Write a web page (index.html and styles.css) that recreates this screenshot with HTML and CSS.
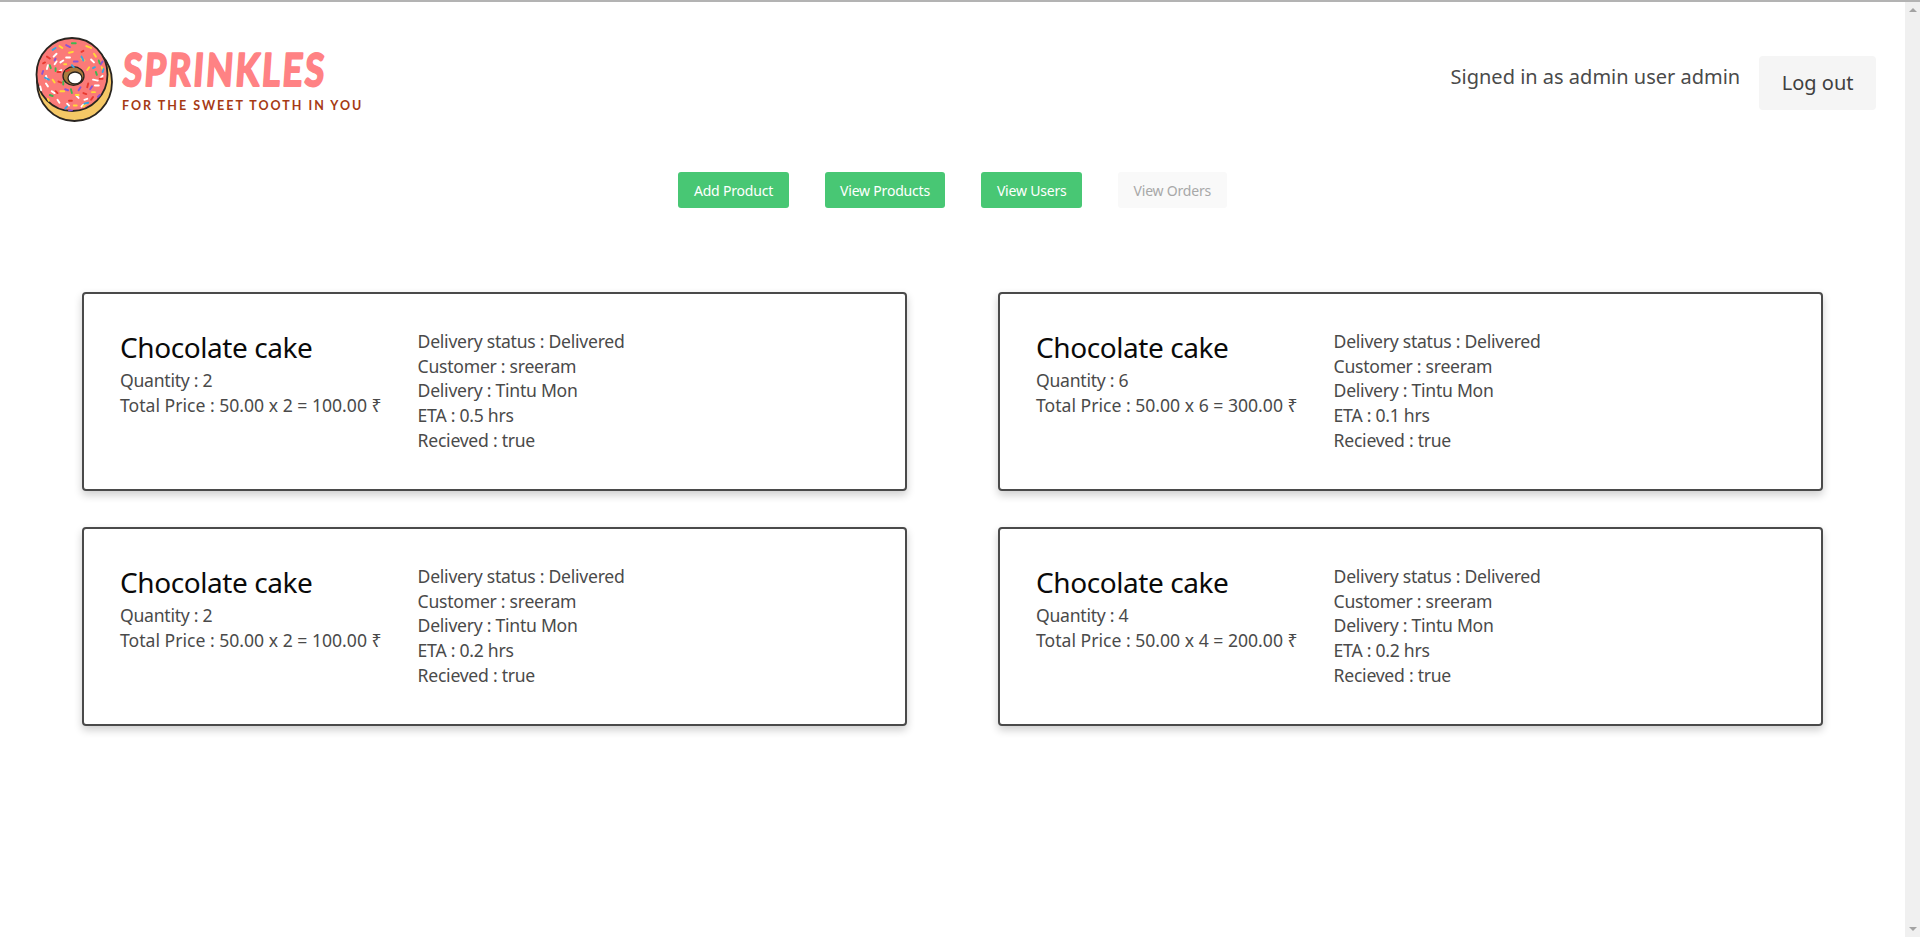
FILE: index.html
```html
<!DOCTYPE html>
<html lang="en">
<head>
<meta charset="utf-8">
<title>Sprinkles</title>
<link rel="stylesheet" href="styles.css">
</head>
<body>
<div class="window">
<div class="page">
  <header class="topbar">
    <div class="brand">
      <svg class="donut" viewBox="0 0 90 90" aria-hidden="true">
        <ellipse cx="44.500" cy="47" rx="37.500" ry="39" fill="#f5c866" stroke="#2a2520" stroke-width="1.800"/>
        <ellipse cx="42" cy="39.500" rx="35.500" ry="36.500" fill="#fb7a78" stroke="#2a2520" stroke-width="1.800"/>
        <ellipse cx="43.500" cy="41" rx="10.500" ry="9.300" fill="#a87a3c" stroke="#2a2520" stroke-width="1.300"/>
        <ellipse cx="45" cy="43" rx="7" ry="6" fill="#fff" stroke="#2a2520" stroke-width="1.300"/>
        <g class="sprinkles" transform="translate(3.500 0.500) scale(.96)">
          <path stroke="#fff" d="M21 22l3-3M34 23l4 0M60 25l3 3M15 31l-1 4M22 30l2-3M29 36l-3 2M7 53l1 4M13 50l2 3M19 58l3 2M62 46l5 1M64 52l4 0M25 67l2 3M35 71l2 2M53 67l3-1M45 63l2 2M13 42l1 3M52 72l-2 2M70 44l2-2M28 28l3-2"/>
          <path stroke="#ffd838" d="M55 11l5 2M37 18l4-1M27 11l3 2M63 19l2 3M50 24l3 2M32 30l2 0M56 36l2-3M15 66l1 2M44 62l3 0M55 71l-3 3M28 58l4 0M42 73l3 0M61 59l3 0M20 46l2 3M71 33l1 2"/>
          <path stroke="#8c55d2" d="M34 10l4 2M23 24l-1 2M42 27l4 0M9 40l1-3M47 57l2-3M67 64l2-2M61 53l-2 3M37 78l3 0M70 30l2-3M33 56l3 1"/>
          <path stroke="#3fb650" d="M40 8l4 0M17 31l1 3M65 38l1 3M31 48l0 3M17 62l3 1M39 56l1 4M68 26l1 3M23 34l0 3"/>
          <path stroke="#3aa6de" d="M20 15l3-2M12 44l4 2M50 22l2 4M62 34l2-1M53 71l4-1M33 76l2-2M73 35l-1 3M40 31l2 2"/>
          <path stroke="#e83a30" d="M14 22l3 2M25 38l3 0M34 37l3-1M50 17l2-1M69 45l3 0M57 50l-1 4M52 60l3 1M37 68l3 0M26 48l3 1M23 58l2 2M62 64l-2 3M10 29l2-1"/>
        </g>
      </svg>
      <div class="wordmark">
        <svg class="brand-name" viewBox="0 0 210 44" role="img" aria-label="SPRINKLES">
          <text class="brand-text" x="6" y="38" textLength="258" lengthAdjust="spacing">SPRINKLES</text>
        </svg>
        <span class="brand-tag">FOR THE SWEET TOOTH IN YOU</span>
      </div>
    </div>
    <div class="account">
      <span class="signed">Signed in as admin user admin</span>
      <a class="logout">Log out</a>
    </div>
  </header>

  <nav class="actions">
    <a class="btn">Add Product</a>
    <a class="btn">View Products</a>
    <a class="btn">View Users</a>
    <a class="btn btn-off">View Orders</a>
  </nav>

  <main class="orders">
    <article class="card">
      <div class="summary">
        <h2>Chocolate cake</h2>
        <p>Quantity : 2</p>
        <p class="total">Total Price : 50.00 x 2 = 100.00 ₹</p>
      </div>
      <div class="details">
        <p>Delivery status : Delivered</p>
        <p>Customer : sreeram</p>
        <p>Delivery : Tintu Mon</p>
        <p>ETA : 0.5 hrs</p>
        <p>Recieved : true</p>
      </div>
    </article>
    <article class="card">
      <div class="summary">
        <h2>Chocolate cake</h2>
        <p>Quantity : 6</p>
        <p class="total">Total Price : 50.00 x 6 = 300.00 ₹</p>
      </div>
      <div class="details">
        <p>Delivery status : Delivered</p>
        <p>Customer : sreeram</p>
        <p>Delivery : Tintu Mon</p>
        <p>ETA : 0.1 hrs</p>
        <p>Recieved : true</p>
      </div>
    </article>
    <article class="card">
      <div class="summary">
        <h2>Chocolate cake</h2>
        <p>Quantity : 2</p>
        <p class="total">Total Price : 50.00 x 2 = 100.00 ₹</p>
      </div>
      <div class="details">
        <p>Delivery status : Delivered</p>
        <p>Customer : sreeram</p>
        <p>Delivery : Tintu Mon</p>
        <p>ETA : 0.2 hrs</p>
        <p>Recieved : true</p>
      </div>
    </article>
    <article class="card">
      <div class="summary">
        <h2>Chocolate cake</h2>
        <p>Quantity : 4</p>
        <p class="total">Total Price : 50.00 x 4 = 200.00 ₹</p>
      </div>
      <div class="details">
        <p>Delivery status : Delivered</p>
        <p>Customer : sreeram</p>
        <p>Delivery : Tintu Mon</p>
        <p>ETA : 0.2 hrs</p>
        <p>Recieved : true</p>
      </div>
    </article>
  </main>
</div>
<aside class="scrollbar"><span class="arrow-up"></span><span class="arrow-down"></span></aside>
</div>
</body>
</html>
```
FILE: styles.css
```css
* { box-sizing: border-box; }
html, body { margin: 0; height: 100%; overflow: hidden; background: #fff; }
body { font-family: "Noto Sans", sans-serif; color: #4a4a4a; }
h2, p { margin: 0; font-weight: 400; }
.window { display: flex; height: 937px; border-top: 2px solid #b3b3b3; }
.page { flex: 1; min-width: 0; }
.scrollbar { width: 15px; background: #f0f0f0; display: flex; flex-direction: column; justify-content: space-between; align-items: center; padding: 6px 0; }
.arrow-up { border: 4px solid transparent; border-top: 0; border-bottom: 4px solid #a3a3a3; }
.arrow-down { border: 4px solid transparent; border-bottom: 0; border-top: 4px solid #a3a3a3; }
.topbar { display: flex; justify-content: space-between; padding: 33px 29px 0 30px; height: 170px; }
.brand { display: flex; align-items: flex-start; gap: 0; }
.donut { width: 90px; height: 90px; filter: blur(.25px); }
.sprinkles path { stroke-width: 2; stroke-linecap: round; fill: none; }
.wordmark { display: flex; flex-direction: column; padding-top: 13px; }
.brand-name { width: 210px; height: 44px; display: block; overflow: visible; }
.brand-text { font-family: "Lato", sans-serif; font-weight: 700; font-size: 45px; fill: #ff8284; stroke: #ff8284; stroke-width: 2.200; stroke-linejoin: round; transform: skewX(-4deg) scaleX(.78); }
.brand-tag { font-family: "Lato", sans-serif; font-weight: 700; font-size: 12.500px; line-height: 16px; color: #a63a14; letter-spacing: 2px; margin: 6px 0 0 2px; }
.account { display: flex; align-items: flex-start; gap: 19px; padding-top: 21px; }
.signed { font-size: 20px; line-height: 36px; margin-top: 3px; }
.logout { display: block; background: #f5f5f5; border-radius: 4px; font-size: 20px; line-height: 30px; padding: 12px 22.500px; color: #404040; }
.actions { display: flex; justify-content: center; gap: 36px; }
.btn { height: 36px; padding: 0 15.500px; display: flex; align-items: center; background: #48c774; color: #fff; border-radius: 3px; font-size: 14px; letter-spacing: -0.2px; }
.btn-off { background: #f9f9f9; color: #a8a8a8; }
.orders { display: grid; grid-template-columns: 825px 825px; column-gap: 91px; row-gap: 36px; padding: 84px 0 0 82px; }
.card { height: 199px; border: 2px solid #4a4a4a; border-radius: 4px; box-shadow: 0 4px 8px rgba(10,10,10,.2); display: flex; gap: 36px; padding: 32px 36px; font-size: 17.600px; line-height: 24.640px; letter-spacing: -0.015em; color: #4a4a4a; }
.summary h2 { font-size: 28px; line-height: 42px; color: #0a0a0a; letter-spacing: -0.015em; }
.total { letter-spacing: 0; }
.details { margin-top: 3px; }
```
